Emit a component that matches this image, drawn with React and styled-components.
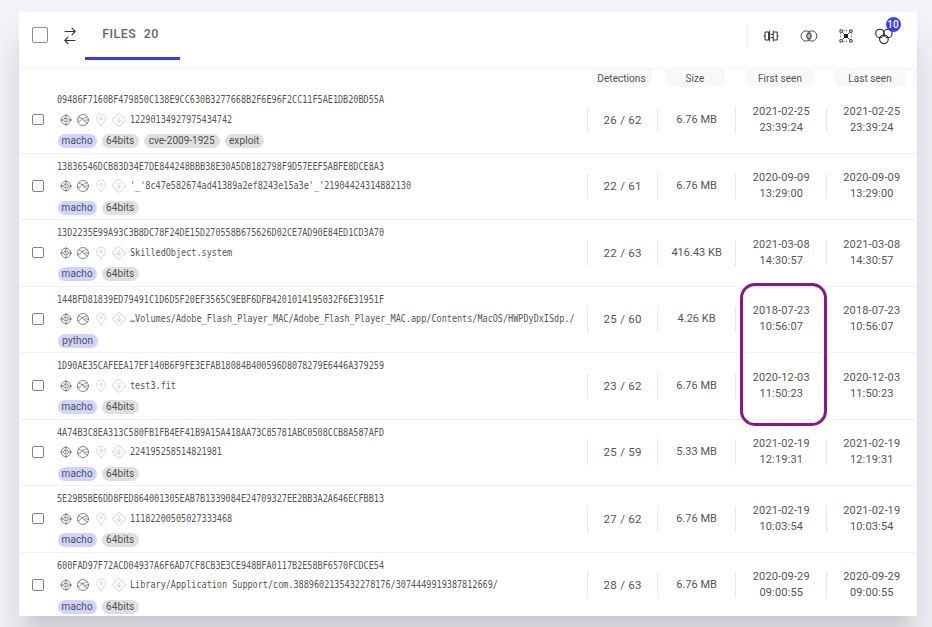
import React from "react";
import styled, { createGlobalStyle } from "styled-components";

const Global = createGlobalStyle`
  * { box-sizing: border-box; }
  html, body { margin: 0; height: 627px; overflow: hidden; background: #f3f3f8; }
  body { font-family: Roboto, "Liberation Sans", sans-serif; color: #555; }
`;

const Page = styled.main`
  height: 627px;
  padding: 12px 15px 11px 19px;
  background: #f3f3f8;
  overflow: hidden;
`;

const Card = styled.section`
  width: 898px;
  height: 604px;
  background: #fff;
  box-shadow: 0 20px 12px -12px rgba(0, 0, 0, 0.07), 0 30px 30px 4px rgba(30, 30, 50, 0.13);
`;

const Clip = styled.div`
  height: 100%;
  overflow: hidden;
`;

const Toolbar = styled.header`
  display: flex;
  height: 57px;
  padding-left: 13px;
  border-bottom: 1px solid #f4f4f5;
`;

const Checkbox = styled.span`
  flex: none;
  display: block;
  width: ${(p) => p.$size}px;
  height: ${(p) => p.$size}px;
  border: 1px solid ${(p) => p.$color};
  border-radius: 2px;
`;

const SelectAll = styled(Checkbox)`
  margin-top: 15px;
`;

const SwapIcon = styled.svg`
  width: 14px;
  height: 20px;
  margin: 14px 8px 0 15px;
`;

const Tab = styled.div`
  display: flex;
  justify-content: center;
  gap: 7.5px;
  width: 95px;
  height: 48px;
  padding: 14px 4px 0 0;
  border-bottom: 3px solid #343aff;
  font: 500 12.5px/16px Roboto, sans-serif;
  color: #666;
  span { letter-spacing: 0.4px; }
`;

const Tools = styled.div`
  display: flex;
  align-items: center;
  gap: 17.5px;
  height: 24px;
  margin: 12px 23.5px 0 auto;
  padding-left: 13px;
  border-left: 1px solid #eeeef0;
`;

const Tool = styled.span`
  position: relative;
  display: block;
  width: 20px;
  height: 20px;
  svg { display: block; width: 20px; height: 20px; }
`;

const Badge = styled.b`
  position: absolute;
  left: 12px;
  top: -9px;
  width: 15px;
  height: 15px;
  border-radius: 50%;
  background: #3a3fff;
  color: #fff;
  font: 500 10px/15px Roboto, sans-serif;
  text-align: center;
`;

const Heads = styled.div`
  display: grid;
  grid-template-columns: 573px 73px 81px 88px 80px 3px;
  height: 18.3px;
`;

const Head = styled.span`
  width: ${(p) => p.$width}px;
  height: 18px;
  border-radius: 0 0 6px 6px;
  background: #f8f8f9;
  font-size: 10px;
  line-height: 19px;
  letter-spacing: 0.05px;
  text-align: center;
  white-space: nowrap;
`;

const Row = styled.div`
  display: grid;
  grid-template-columns: 568.4px 69.5px 78.4px 91px 90px;
  height: 66.5px;
  border-bottom: 1px solid #f1f1f2;
`;

const Main = styled.div`
  display: flex;
  gap: 13.4px;
  padding: 5px 0 0 13px;
`;

const RowCheck = styled(Checkbox)`
  margin-top: 21.5px;
`;

const Details = styled.div`
  flex: 1;
  min-width: 0;
`;

const Mono = styled.div`
  flex: none;
  width: max-content;
  height: 16px;
  font: 11px/16px "DejaVu Sans Mono", "Liberation Mono", monospace;
  white-space: pre;
  color: #555;
  transform: scaleX(0.7715);
  transform-origin: 0 50%;
`;

const FileLine = styled.div`
  display: flex;
  align-items: center;
  width: 530px;
  height: 16px;
  margin-top: 3.5px;
`;

const FileIcons = styled.span`
  display: flex;
  flex: none;
  gap: 3.7px;
  width: 73px;
  padding-left: 1.7px;
  svg { width: 14px; height: 14px; display: block; }
`;

const Tags = styled.div`
  display: flex;
  gap: 5px;
  margin: 6.5px 0 0 0.8px;
`;

const Tag = styled.span`
  height: 14px;
  width: ${(p) => p.$width}px;
  border-radius: 7px;
  background: ${(p) => (p.$blue ? "#cfd4ff" : "#dfdfdf")};
  color: #505054;
  font-size: 10px;
  line-height: 14px;
  letter-spacing: ${(p) => (p.$width > 50 ? 0 : 0.1)}px;
  text-align: center;
  white-space: nowrap;
`;

const Cell = styled.div`
  display: flex;
  align-items: center;
  justify-content: center;
  height: 26px;
  margin-top: 19.7px;
  border-left: 1px solid #e8e8ea;
  font-size: ${(p) => p.$size || 11}px;
  line-height: 16.2px;
  letter-spacing: ${(p) => p.$spacing || 0}px;
  text-align: center;
  white-space: pre;
`;

const Highlight = styled.div`
  position: absolute;
  left: 740px;
  top: 283px;
  width: 87px;
  height: 143px;
  border: 3px solid #8c1688;
  border-radius: 15px;
`;

const line = { fill: "none", strokeLinecap: "round", strokeLinejoin: "round" };

const FileGlyphs = () => (
  <FileIcons>
    <svg viewBox="0 0 14 14" {...line} stroke="#6a6a6a" strokeWidth="0.8">
      <circle cx="7" cy="7" r="4.7" />
      <rect x="4.8" y="5.2" width="4.4" height="3.6" rx="1.2" />
      <path d="M7 1.5v2.6M7 9.9v2.6M1.5 7h2.6M9.9 7h2.6M6.6 7h.8" />
    </svg>
    <svg viewBox="0 0 14 14" {...line} stroke="#6a6a6a" strokeWidth="0.8">
      <circle cx="7" cy="7" r="5.5" />
      <path d="M2.6 4c1.6.2 2.2 1.4 3.8 1.5C8 5.6 9 4.2 11 3.6M6.4 5.5C5.4 7.6 3.6 7.8 1.9 8.8M6.4 5.5c.6 2.3 3.2 2.5 4.9 5M8.6 7.4c1.2-.6 2.2-.6 3.6-.2" />
    </svg>
    <svg viewBox="0 0 14 14" {...line} stroke="#cdcdcd" strokeWidth="0.8">
      <path d="M7 12.7C4.8 9.8 2.6 7.8 2.6 5.5a4.4 4.4 0 0 1 8.8 0c0 2.3-2.2 4.3-4.4 7.2Z" />
      <circle cx="7" cy="5.6" r="1.4" />
    </svg>
    <svg viewBox="0 0 14 14" {...line} stroke="#c2c2c2" strokeWidth="0.8">
      <path d="M7 .4 13.6 7 7 13.6.4 7ZM7 4.4v4.7M4.9 7.1 7 9.2l2.1-2.1" />
    </svg>
  </FileIcons>
);

const tagWidths = { macho: 39, "64bits": 37, "cve-2009-1925": 76, exploit: 39, python: 40 };

const files = [
  ["09486F7160BF479850C138E9CC630B3277668B2F6E96F2CC11F5AE1DB20BD55A", "12290134927975434742", ["macho", "64bits", "cve-2009-1925", "exploit"], "26 / 62", "6.76 MB", "2021-02-25", "23:39:24"],
  ["13836546DCB83D34E7DE844248BBB38E30A5DB182798F9D57EEF5ABFE8DCE8A3", "'_'8c47e582674ad41389a2ef8243e15a3e'_'21904424314882130", ["macho", "64bits"], "22 / 61", "6.76 MB", "2020-09-09", "13:29:00"],
  ["13D2235E99A93C3B8DC78F24DE15D270558B675626D02CE7AD90E84ED1CD3A70", "SkilledObject.system", ["macho", "64bits"], "22 / 63", "416.43 KB", "2021-03-08", "14:30:57"],
  ["144BFD81839ED79491C1D6D5F20EF3565C9EBF6DFB4201014195032F6E31951F", "…Volumes/Adobe_Flash_Player_MAC/Adobe_Flash_Player_MAC.app/Contents/MacOS/HWPDyDxISdp./", ["python"], "25 / 60", "4.26 KB", "2018-07-23", "10:56:07"],
  ["1D90AE35CAFEEA17EF140B6F9FE3EFAB18084B400596D8078279E6446A379259", "test3.fit", ["macho", "64bits"], "23 / 62", "6.76 MB", "2020-12-03", "11:50:23"],
  ["4A74B3C8EA313C580FB1FB4EF41B9A15A418AA73C85781ABC0508CCB8A587AFD", "224195258514821981", ["macho", "64bits"], "25 / 59", "5.33 MB", "2021-02-19", "12:19:31"],
  ["5E29B5BE6DD8FED864001305EAB7B1339084E24709327EE2BB3A2A646ECFBB13", "11182200505027333468", ["macho", "64bits"], "27 / 62", "6.76 MB", "2021-02-19", "10:03:54"],
  ["600FAD97F72ACD04937A6F6AD7CF8CB3E3CE948BFA0117B2E58BF6570FCDCE54", "Library/Application Support/com.3889602135432278176/3074449919387812669/", ["macho", "64bits"], "28 / 63", "6.76 MB", "2020-09-29", "09:00:55"],
];

const FileRow = ({ file: [hash, name, tags, detections, size, date, time] }) => (
  <Row>
    <Main>
      <RowCheck $size={11.5} $color="#808080" />
      <Details>
        <Mono>{hash}</Mono>
        <FileLine>
          <FileGlyphs />
          <Mono>{name}</Mono>
        </FileLine>
        <Tags>
          {tags.map((t, i) => (
            <Tag key={t} $blue={i === 0} $width={tagWidths[t]}>{t}</Tag>
          ))}
        </Tags>
      </Details>
    </Main>
    <Cell $size={11.5} $spacing={0.25}>{detections}</Cell>
    <Cell>{size}</Cell>
    <Cell $spacing={0.15}>{date + "\n" + time}</Cell>
    <Cell $spacing={0.15}>{date + "\n" + time}</Cell>
  </Row>
);

export default function App() {
  return (
    <Page>
      <Global />
      <Card>
        <Clip>
          <Toolbar>
            <SelectAll $size={16} $color="#8c8c8c" />
            <SwapIcon viewBox="0 0 14 20" {...line} stroke="#333" strokeWidth="1.1">
              <path d="M2 5.5h10M9 2.2l3.2 3.3L9 8.8M12 14.5H2M5 11.2l-3.2 3.3L5 17.8" />
            </SwapIcon>
            <Tab><span>FILES</span><span>20</span></Tab>
            <Tools>
              <Tool>
                <svg viewBox="0 0 20 20" fill="none" stroke="#2b2b2b" strokeWidth="1">
                  <path d="M4 6h3.6v8H4ZM2.5 10H4M8.6 4.6v10.8M12.2 4.6v10.8M12.8 6h3.4v8h-3.4M16.2 10h1.4M9.6 8.4h2.6M9.6 11.6h2.6" />
                </svg>
              </Tool>
              <Tool>
                <svg viewBox="0 0 20 20" fill="none" stroke="#3a3a3a" strokeWidth="0.9">
                  <circle cx="7.2" cy="10" r="5.1" /><circle cx="12.8" cy="10" r="5.1" />
                  <ellipse cx="10" cy="10" rx="1.2" ry="3" />
                </svg>
              </Tool>
              <Tool>
                <svg viewBox="0 0 20 20" fill="none" stroke="#333" strokeWidth="0.9">
                  <path d="M3.9 3.9h2.4v2.4H3.9ZM13.7 3.9h2.4v2.4h-2.4ZM3.9 13.7h2.4v2.4H3.9ZM13.7 13.7h2.4v2.4h-2.4ZM6.5 6.5l7 7M13.5 6.5l-7 7" />
                  <path strokeDasharray="1 1.5" d="M7.5 4.6h5M7.5 15.4h5M4.6 7.5v5M15.4 7.5v5" />
                  <rect x="8" y="8" width="4" height="4" fill="#222" stroke="none" />
                </svg>
              </Tool>
              <Tool>
                <Badge>10</Badge>
                <svg viewBox="0 0 20 20" fill="none" stroke="#222" strokeWidth="1.1" overflow="visible">
                  <circle cx="5.9" cy="7.4" r="4.2" /><circle cx="13.9" cy="7.4" r="4.2" /><circle cx="9.9" cy="13.3" r="4.3" />
                </svg>
              </Tool>
            </Tools>
          </Toolbar>
          <Heads>
            <span />
            <Head $width={59}>Detections</Head>
            <Head $width={60}>Size</Head>
            <Head $width={68}>First seen</Head>
            <Head $width={72}>Last seen</Head>
            <Head $width={10} />
          </Heads>
          {files.map((f) => <FileRow key={f[0]} file={f} />)}
        </Clip>
      </Card>
      <Highlight />
    </Page>
  );
}
